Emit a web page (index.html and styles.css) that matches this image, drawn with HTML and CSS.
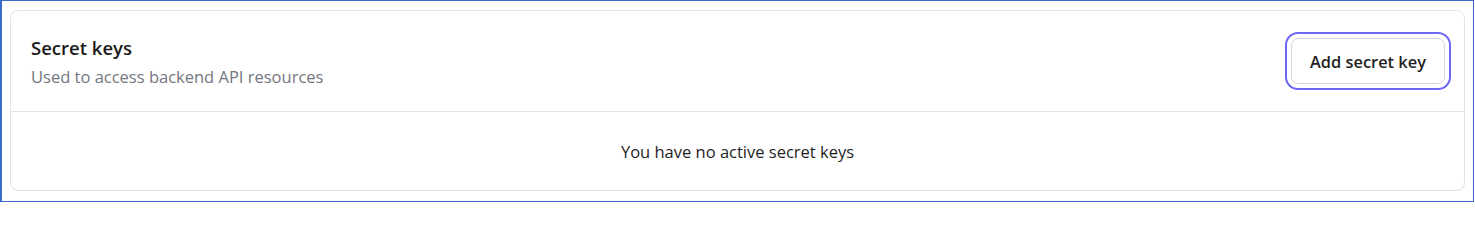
FILE: index.html
```html
<!DOCTYPE html>
<html lang="en">
<head>
<meta charset="utf-8">
<title>Secret keys</title>
<link rel="stylesheet" href="styles.css">
</head>
<body>
<div class="frame">
  <section class="card">
    <header class="card-header">
      <div class="heading">
        <h2 class="title">Secret keys</h2>
        <p class="subtitle">Used to access backend API resources</p>
      </div>
      <button class="btn" type="button">Add secret key</button>
    </header>
    <div class="card-body">
      <p class="empty">You have no active secret keys</p>
    </div>
  </section>
</div>
</body>
</html>
```

FILE: styles.css
```css
* { box-sizing: border-box; }
html, body { margin: 0; padding: 0; background: #fff; }
body {
  font-family: "Open Sans", "Noto Sans", "Liberation Sans", sans-serif;
  color: #1f1f1f;
}
.frame {
  width: 1474px;
  height: 202px;
  border: 1px solid #3a6bc8;
  border-left-width: 2px;
  padding: 9px 8px 10px 8px;
}
.card {
  width: 1455px;
  height: 181px;
  border: 1px solid #e3e3e3;
  border-radius: 8px;
  display: flex;
  flex-direction: column;
}
.card-header {
  height: 101px;
  border-bottom: 1px solid #e3e3e3;
  display: flex;
  align-items: center;
  justify-content: space-between;
  padding: 0 19px 0 20px;
}
.heading { display: flex; flex-direction: column; }
.title {
  margin: 0;
  font-size: 18.5px;
  font-weight: 600;
  line-height: 26px;
  color: #1a1a1a;
}
.subtitle {
  margin: 5px 0 0;
  font-size: 16.5px;
  line-height: 22px;
  color: #737780;
}
.btn {
  width: 154px;
  height: 46px;
  border: 1px solid #d6d6d6;
  border-radius: 7px;
  background: #fff;
  font-family: inherit;
  font-size: 16.4px;
  font-weight: 600;
  color: #1f1f1f;
  box-shadow: 0 0 0 4px #fff, 0 0 0 6px #6e66f4;
  padding: 0;
}
.card-body {
  flex: 1;
  display: flex;
  align-items: center;
  justify-content: center;
  padding-top: 2px;
}
.empty {
  margin: 0;
  font-size: 16.5px;
  line-height: 22px;
  color: #1f1f1f;
}
```
